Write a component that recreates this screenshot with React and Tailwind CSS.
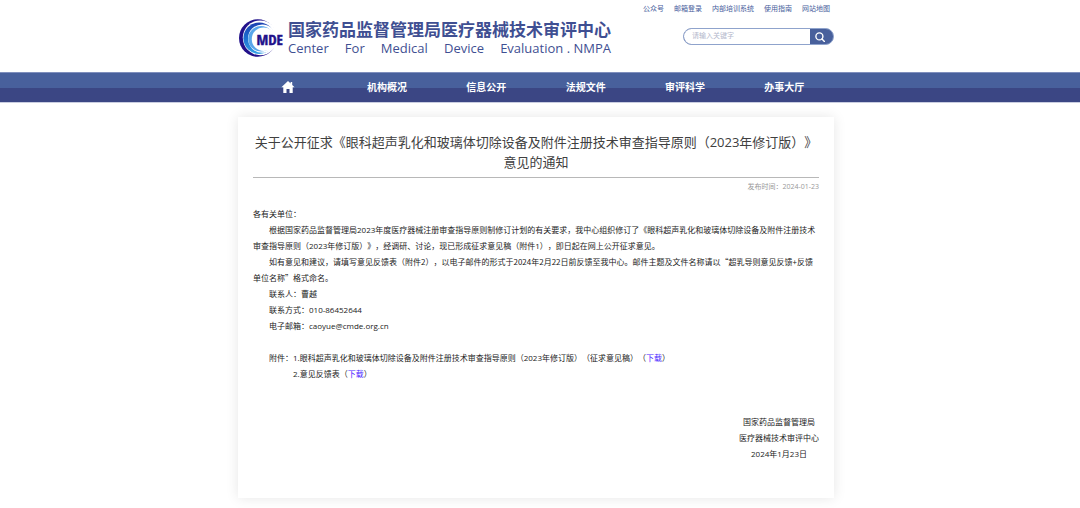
import React from "react";

const topLinks = ["公众号", "邮箱登录", "内部培训系统", "使用指南", "网站地图"];

const navItems = ["机构概况", "信息公开", "法规文件", "审评科学", "办事大厅"];

const englishName = ["Center", "For", "Medical", "Device", "Evaluation . NMPA"];

const Logo = () => (
  <svg className="h-[38px] w-[46px] shrink-0" viewBox="0 0 46 38" aria-hidden="true">
    <defs>
      <linearGradient id="ring" x1="0" y1="0" x2="0" y2="1">
        <stop offset="0" stopColor="#1d3fb0" />
        <stop offset="0.5" stopColor="#1c6fd0" />
        <stop offset="1" stopColor="#35a3e6" />
      </linearGradient>
    </defs>
    <circle cx="19.8" cy="19" r="18.8" fill="#22118a" />
    <circle cx="22.2" cy="18.8" r="17.4" fill="#fff" />
    <circle cx="21.2" cy="19.2" r="15.8" fill="url(#ring)" />
    <circle cx="24.2" cy="19.6" r="14.2" fill="#fff" />
    <circle cx="23" cy="19.8" r="12.8" fill="#5aa6ea" />
    <circle cx="25.6" cy="20.2" r="11.8" fill="#fff" />
    <rect x="36" y="8" width="10" height="24" fill="#fff" />
    <text
      x="45"
      y="25.5"
      textAnchor="end"
      fontFamily="'Open Sans Condensed', 'Roboto Condensed', 'Liberation Sans Narrow', 'Liberation Sans', sans-serif"
      fontSize="15"
      fontWeight="700"
      fill="#22118a"
      stroke="#22118a"
      strokeWidth="0.4"
    >
      MDE
    </text>
  </svg>
);

const Header = () => (
  <header className="mx-auto flex h-[72px] w-full max-w-[596px] justify-between">
    <a href="#" className="flex items-start pt-[19px]">
      <Logo />
      <div className="ml-1 text-[#3f4f92]">
        <p className="pt-px text-[17px] leading-5 font-bold">
          国家药品监督管理局医疗器械技术审评中心
        </p>
        <p className="flex justify-between text-[13px] leading-4">
          {englishName.map((word) => (
            <span key={word}>{word}</span>
          ))}
        </p>
      </div>
    </a>
    <div className="flex flex-col items-end">
      <ul className="flex gap-2.5 pt-1 pr-1 text-[7px] leading-[10px] text-[#48609c]">
        {topLinks.map((item) => (
          <li key={item}>
            <a href="#">{item}</a>
          </li>
        ))}
      </ul>
      <form className="mt-3.5 flex h-[17px] w-[151px] overflow-hidden rounded-full border border-[#8fa3cc] bg-[#48609c]">
        <input
          type="text"
          aria-label="请输入关键字"
          placeholder="请输入关键字"
          className="w-full min-w-0 bg-white pl-2 text-[7px] outline-none placeholder:text-[#b4b8cc]"
        />
        <button
          type="button"
          aria-label="搜索"
          className="flex w-[23px] shrink-0 items-center justify-center pr-1"
        >
          <svg className="size-2.5" viewBox="0 0 10 10" fill="none" stroke="#fff" strokeWidth="1.4">
            <circle cx="4.4" cy="4.4" r="3.5" />
            <path d="M7 7l2.4 2.4" strokeLinecap="round" />
          </svg>
        </button>
      </form>
    </div>
  </header>
);

const Nav = () => (
  <nav className="border-y border-t-[#7f8fbd] border-b-[#c9cde0] bg-linear-to-b from-[#48609c] from-52% to-[#3b4684] to-52% pr-2">
    <ul className="mx-auto grid w-full max-w-[596px] grid-cols-6 pt-1.5 pb-[7px] text-center text-[10px] leading-4 font-bold text-white">
      <li>
        <a href="#" aria-label="首页" className="flex h-4 items-center justify-center">
          <svg className="h-3 w-3.5" viewBox="0 0 14 12" fill="#fff">
            <path d="M7 0L0.4 6.2h1.9V12h3.2V8.1h3V12h3.2V6.2h1.9L11.2 4V1H9.6v1.5z" />
          </svg>
        </a>
      </li>
      {navItems.map((item) => (
        <li key={item}>
          <a href="#">{item}</a>
        </li>
      ))}
    </ul>
  </nav>
);

const Download = () => (
  <a href="#" className="text-[#4a1cff]">
    下载
  </a>
);

const Article = () => (
  <article className="mx-auto mt-3.5 w-full max-w-[596px] bg-white px-[15px] pt-[15px] pb-9 shadow-[0_0_12px_rgba(0,0,0,0.1)]">
    <h1 className="border-b border-[#b8b8b8] pb-[5px] text-center text-[13px] leading-5 text-[#404040]">
      关于公开征求《眼科超声乳化和玻璃体切除设备及附件注册技术审查指导原则（2023年修订版）》意见的通知
    </h1>
    <p className="pt-1 text-right text-[7px] leading-[10px] text-[#999]">
      发布时间：2024-01-23
    </p>
    <div className="pt-3.5 text-[8px] leading-4 text-[#222]">
      <p>各有关单位：</p>
      <p className="indent-4">
        根据国家药品监督管理局2023年度医疗器械注册审查指导原则制修订计划的有关要求，我中心组织修订了《眼科超声乳化和玻璃体切除设备及附件注册技术审查指导原则（2023年修订版）》，经调研、讨论，现已形成征求意见稿（附件1），即日起在网上公开征求意见。
      </p>
      {/* CJK font first, so that the quotation marks are full-width */}
      <p className="indent-4 font-['Noto_Sans_CJK_SC',sans-serif]">
        如有意见和建议，请填写意见反馈表（附件2），以电子邮件的形式于2024年2月22日前反馈至我中心。邮件主题及文件名称请以“超乳导则意见反馈+反馈单位名称”格式命名。
      </p>
      <p className="indent-4">联系人：曹越</p>
      <p className="indent-4">联系方式：010-86452644</p>
      <p className="indent-4">电子邮箱：caoyue@cmde.org.cn</p>
      <div className="flex pt-4 pl-4">
        <p>附件：</p>
        <ol>
          <li>
            1.眼科超声乳化和玻璃体切除设备及附件注册技术审查指导原则（2023年修订版）（征求意见稿）（
            <Download />）
          </li>
          <li>
            2.意见反馈表（
            <Download />）
          </li>
        </ol>
      </div>
      <div className="ml-auto w-fit pt-8 text-center">
        <p>国家药品监督管理局</p>
        <p>医疗器械技术审评中心</p>
        <p>2024年1月23日</p>
      </div>
    </div>
  </article>
);

const App = () => {
  return (
    <div
      lang="zh-CN"
      className="min-h-screen bg-white pb-2.5 font-['Open_Sans','Noto_Sans_CJK_SC',sans-serif] [text-spacing-trim:space-all]"
    >
      <div className="pr-2">
        <Header />
      </div>
      <Nav />
      <main className="pr-2">
        <Article />
      </main>
    </div>
  );
};

export default App;
